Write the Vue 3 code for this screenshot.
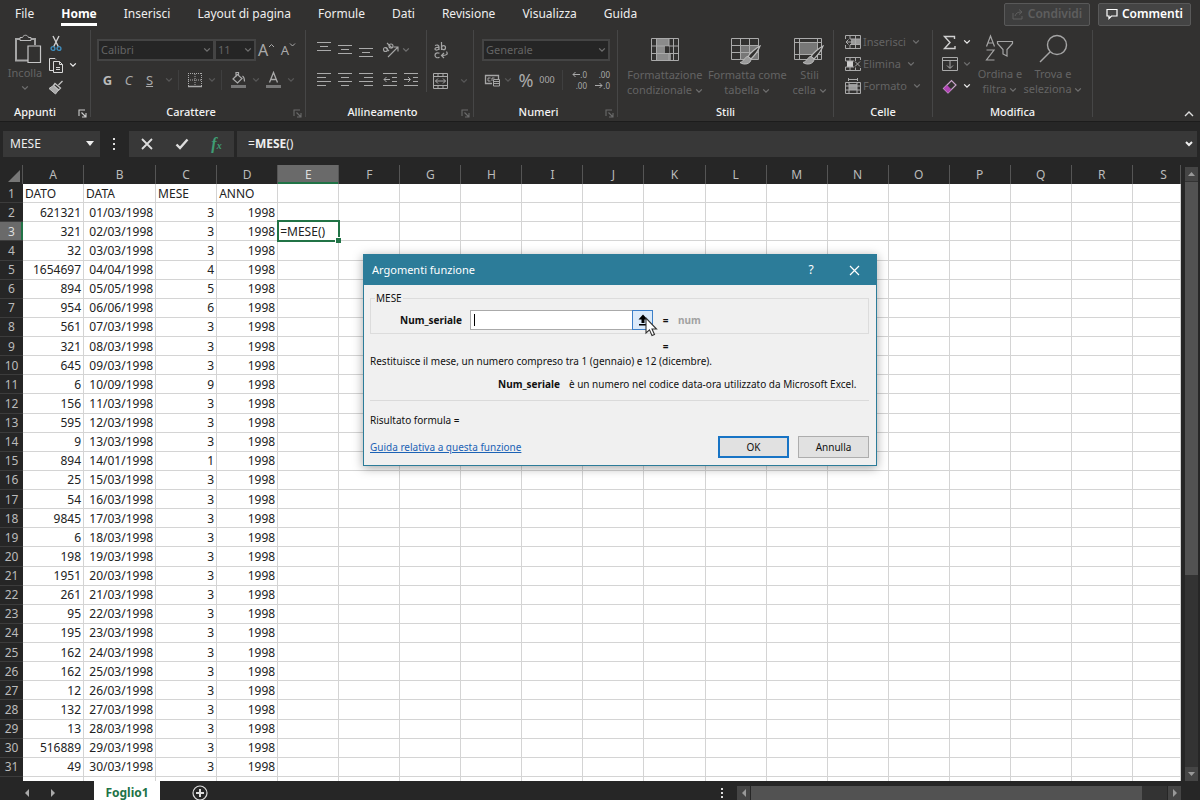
<script setup>
import { ref } from 'vue'

const tabs = ['File', 'Home', 'Inserisci', 'Layout di pagina', 'Formule', 'Dati', 'Revisione', 'Visualizza', 'Guida']
const activeTab = ref('Home')
const columns = 'ABCDEFGHIJKLMNOPQRS'.split('')
const emptyColumns = columns.slice(5)

const records = [
  ['621321', '01/03/1998', 3], ['321', '02/03/1998', 3], ['32', '03/03/1998', 3],
  ['1654697', '04/04/1998', 4], ['894', '05/05/1998', 5], ['954', '06/06/1998', 6],
  ['561', '07/03/1998', 3], ['321', '08/03/1998', 3], ['645', '09/03/1998', 3],
  ['6', '10/09/1998', 9], ['156', '11/03/1998', 3], ['595', '12/03/1998', 3],
  ['9', '13/03/1998', 3], ['894', '14/01/1998', 1], ['25', '15/03/1998', 3],
  ['54', '16/03/1998', 3], ['9845', '17/03/1998', 3], ['6', '18/03/1998', 3],
  ['198', '19/03/1998', 3], ['1951', '20/03/1998', 3], ['261', '21/03/1998', 3],
  ['95', '22/03/1998', 3], ['195', '23/03/1998', 3], ['162', '24/03/1998', 3],
  ['162', '25/03/1998', 3], ['12', '26/03/1998', 3], ['132', '27/03/1998', 3],
  ['13', '28/03/1998', 3], ['516889', '29/03/1998', 3], ['49', '30/03/1998', 3]
]
const formula = ref('=MESE()')
const serial = ref('')
</script>

<template>
  <div class="app">
    <svg class="defs" width="0" height="0" aria-hidden="true">
      <symbol id="chev" viewBox="0 0 8 6"><path d="M1.2 1.4 4 4.2 6.8 1.4" fill="none" stroke="currentColor" stroke-width="1.3" /></symbol>
      <symbol id="launch" viewBox="0 0 9 9"><path d="M1 7V1H7M3.500 3.500 7.500 7.500M8 4V8H4" fill="none" stroke="currentColor" stroke-width="1.100" /></symbol>
      <symbol id="brush" viewBox="0 0 22 20">
        <path d="M21 1C17 3 11 8 9 11.500L12 14C15 11 19.500 5 21 1Z" fill="#323130" stroke="currentColor" stroke-width="1.200" />
        <path d="M9 11.500C5.500 11.500 6 16 1 17.500 5 20.500 12 19 12 14Z" fill="#9a9a9a" stroke="currentColor" />
      </symbol>
    </svg>

    <header class="ribbon">
      <nav class="tabs">
        <button v-for="t in tabs" :key="t" :class="['tab', { active: t === activeTab }]" @click="activeTab = t"><span>{{ t }}</span></button>
        <span class="spacer"></span>
        <button class="top-btn off" disabled>
          <svg width="12" height="12" viewBox="0 0 12 12" fill="none" stroke="currentColor"><path d="M1 5V11H10V8M3 8C4 5 6 4 9 4M7 1.500 10 4 7 6.500" /></svg>Condividi
        </button>
        <button class="top-btn">
          <svg width="12" height="12" viewBox="0 0 12 12" fill="none" stroke="currentColor" stroke-width="1.200"><path d="M1 1.500H11V8H5.500L3 10.500V8H1Z" /></svg>Commenti
        </button>
      </nav>

      <div class="groups">
        <section class="group g-clip">
          <div class="body clip">
            <button class="big paste">
              <svg width="28" height="30" viewBox="0 0 28 30" fill="none"><path d="M6 5H2V26.500H14" stroke="#a5a5a5" stroke-width="2" /><path d="M17 5H21V11" stroke="#a5a5a5" stroke-width="2" /><path d="M6 6.500V3.500H8.500C9.500 .5 13.500 .5 14.500 3.500H17V6.500Z" stroke="#bbb" /><path d="M14 12H26.500V28.500H14Z" stroke="#c6c6c6" stroke-width="1.200" /></svg>
              <span>Incolla</span>
              <svg class="chev"><use href="#chev" /></svg>
            </button>
            <div class="stack">
              <button class="ic" aria-label="Taglia"><svg width="12" height="17" viewBox="0 0 12 17" fill="none"><path d="M3 1 8.500 12M9 1 3.500 12" stroke="#d0d0d0" stroke-width="1.400" /><circle cx="3" cy="13.500" r="1.900" stroke="#3f8dbd" stroke-width="1.400" /><circle cx="9" cy="13.500" r="1.900" stroke="#3f8dbd" stroke-width="1.400" /></svg></button>
              <button class="ic bright" aria-label="Copia"><svg width="16" height="16" viewBox="0 0 16 16" fill="none" stroke="#d8d8d8"><path d="M5.500 13.500H1.500V1.500H7L8 2.500M5.500 4.500H11.500L14.500 7.500V15.500H5.500ZM11.500 4.500V7.500H14.500M8 10.500H12M8 12.500H12" /></svg><svg class="chev"><use href="#chev" /></svg></button>
              <button class="ic" aria-label="Copia formato"><svg width="16" height="15" viewBox="0 0 16 15" fill="none" stroke="#c4c4c4"><path d="M14.500 1 10.500 5M7 3.500 12.500 8 10.500 10 5.500 5.500Z" stroke-width="1.300" /><path d="M5.500 5.500 1 8.500 7.500 14 10.500 10Z" fill="#aaa" /></svg></button>
            </div>
          </div>
          <div class="title"><span>Appunti</span><button class="launch lit" aria-label="Opzioni Appunti"><svg width="9" height="9"><use href="#launch" /></svg></button></div>
        </section>

        <section class="group g-font">
          <div class="body rows">
            <div class="row">
              <button class="combo font" role="combobox" aria-label="Carattere">Calibri<svg class="chev"><use href="#chev" /></svg></button>
              <button class="combo size" role="combobox" aria-label="Dimensione">11<svg class="chev"><use href="#chev" /></svg></button>
              <button class="ic letter grow" aria-label="Aumenta dimensione">A<svg class="caret" viewBox="0 0 8 6"><path d="M1 4 3.500 1.500 6 4" fill="none" stroke="currentColor" /></svg></button>
              <button class="ic letter shrink" aria-label="Riduci dimensione">A<svg class="caret" viewBox="0 0 8 6"><path d="M1 1.500 3.500 4 6 1.500" fill="none" stroke="currentColor" /></svg></button>
            </div>
            <div class="row second">
              <button class="ic st b">G</button>
              <button class="ic st i">C</button>
              <button class="ic st u">S</button>
              <svg class="chev dim"><use href="#chev" /></svg>
              <i class="sep"></i>
              <button class="ic" aria-label="Bordi"><svg width="16" height="16" viewBox="0 0 16 16" fill="none" stroke="#aaa"><path d="M1 1.500H15M1.500 1V14M14.500 1V14M8 2V14M1 8H15" stroke-dasharray="1 1" /><path d="M1 14.500H15" stroke-width="1.500" /></svg></button>
              <svg class="chev dim"><use href="#chev" /></svg>
              <i class="sep"></i>
              <button class="ic" aria-label="Colore riempimento"><svg width="17" height="18" viewBox="0 0 17 18" fill="none" stroke="#aaa"><path d="M7.500 3.500 3 8 7.500 12 12 7.500ZM6 6V1.500H8.500V5M12.500 5C14 6 14.500 8 14.500 10.500" stroke-width="1.200" /><path d="M1 15.500H16" stroke="#777" stroke-width="3" /></svg></button>
              <svg class="chev dim"><use href="#chev" /></svg>
              <button class="ic" aria-label="Colore carattere"><svg width="17" height="18" viewBox="0 0 17 18" fill="none" stroke="#aaa"><path d="M4.500 11.500 8.500 1.500 12.500 11.500M6 8.500H11" stroke-width="1.300" /><path d="M1 15.500H16" stroke="#777" stroke-width="3" /></svg></button>
              <svg class="chev dim"><use href="#chev" /></svg>
            </div>
          </div>
          <div class="title"><span>Carattere</span><button class="launch" aria-label="Opzioni Carattere"><svg width="9" height="9"><use href="#launch" /></svg></button></div>
        </section>

        <section class="group g-align">
          <div class="body rows align">
            <div class="row">
              <button class="ic al" aria-label="Allinea in alto"><svg width="15" height="18" viewBox="0 0 15 18" stroke="#aaa"><path d="M0 1.500H14M3 5.500H11M0 9.500H14" /></svg></button>
              <button class="ic al" aria-label="Allinea al centro"><svg width="15" height="18" viewBox="0 0 15 18" stroke="#aaa"><path d="M0 4.500H14M3 8.500H11M0 12.500H14" /></svg></button>
              <button class="ic al" aria-label="Allinea in basso"><svg width="15" height="18" viewBox="0 0 15 18" stroke="#aaa"><path d="M0 7.500H14M3 11.500H11M0 15.500H14" /></svg></button>
              <button class="ic al wide" aria-label="Orientamento"><svg width="17" height="16" viewBox="0 0 17 16" fill="none" stroke="#a5a5a5" stroke-width="1.100"><path d="M6 15 15.500 5.500M11.500 5H16V9.500" /><circle cx="3.500" cy="7.500" r="2" /><path d="M3.500 5.500 7 9M5 1 10 6" /><circle cx="9" cy="4" r="2" /></svg><svg class="chev"><use href="#chev" /></svg></button>
            </div>
            <div class="row second">
              <button class="ic al" aria-label="Allinea a sinistra"><svg width="15" height="14" viewBox="0 0 15 14" stroke="#aaa"><path d="M0 .5H14M0 4.500H9M0 8.500H14M0 12.500H9" /></svg></button>
              <button class="ic al" aria-label="Centra"><svg width="15" height="14" viewBox="0 0 15 14" stroke="#aaa"><path d="M0 .5H14M3 4.500H11M0 8.500H14M3 12.500H11" /></svg></button>
              <button class="ic al" aria-label="Allinea a destra"><svg width="15" height="14" viewBox="0 0 15 14" stroke="#aaa"><path d="M0 .5H14M5 4.500H14M0 8.500H14M5 12.500H14" /></svg></button>
              <button class="ic al ind" aria-label="Riduci rientro"><svg width="15" height="14" viewBox="0 0 15 14" fill="none" stroke="#aaa"><path d="M0 .5H14M9 4.500H14M9 8.500H14M0 12.500H14M7 6.500H1M3.500 4 1 6.500 3.500 9" /></svg></button>
              <button class="ic al" aria-label="Aumenta rientro"><svg width="15" height="14" viewBox="0 0 15 14" fill="none" stroke="#aaa"><path d="M0 .5H14M9 4.500H14M9 8.500H14M0 12.500H14M0 6.500H6M4 4 6.500 6.500 4 9" /></svg></button>
            </div>
          </div>
          <div class="wrapcol">
            <button class="ic" aria-label="Testo a capo"><svg width="16" height="17" viewBox="0 0 16 17" fill="none" stroke="#a5a5a5" stroke-width="1.200"><path d="M2 3.500C4 2.500 6 3 6 5V8M6 5.500C3 5 2 6 2 7 2 8.500 5 8.500 6 6.500M8.500 0V8" /><circle cx="10.500" cy="5.700" r="2" /><path d="M6.500 11.300C4 10 2 11.500 2 13.300S4 16.500 6.500 15.300M13.500 9.500C15.500 12.500 13 13.500 9 13.500M11 11 8.500 13.500 11 16" /></svg></button>
            <button class="ic" aria-label="Unisci e centra"><svg width="15" height="16" viewBox="0 0 15 16" fill="none" stroke="#aaa"><path d="M.5 .5H14.500V15.500H.5ZM.5 3.500H14.500M.5 12.500H14.500M5 .5V3.500M10 .5V3.500M5 12.500V15.500M10 12.500V15.500M2.500 8H12.500M5 5.500 2.500 8 5 10.500M10 5.500 12.500 8 10 10.500" /></svg><svg class="chev dim"><use href="#chev" /></svg></button>
          </div>
          <div class="title"><span>Allineamento</span><button class="launch" aria-label="Opzioni Allineamento"><svg width="9" height="9"><use href="#launch" /></svg></button></div>
        </section>

        <section class="group g-num">
          <div class="body rows">
            <div class="row"><button class="combo num" role="combobox" aria-label="Formato numero">Generale<svg class="chev"><use href="#chev" /></svg></button></div>
            <div class="row second nums">
              <button class="ic" aria-label="Formato contabilità"><svg width="17" height="14" viewBox="0 0 17 14" fill="none" stroke="#a5a5a5"><path d="M8 10.500H1.500V2.500H14.500V6" stroke-width="1.300" /><path d="M6.500 5H4V8H6.500M8 8V5H10.500" /><path d="M9.500 6.500H15.500V13H9.500ZM9.500 8.500H15.500M9.500 10.500H15.500" fill="#323130" /></svg><svg class="chev dim"><use href="#chev" /></svg></button>
              <button class="ic pct">%</button>
              <button class="ic zeros">000</button>
              <i class="sep"></i>
              <button class="ic dec" aria-label="Aumenta decimali"><span><svg width="8" height="7" viewBox="0 0 8 7"><path d="M8 3.500H1M3.500 1 1 3.500 3.500 6" fill="none" stroke="currentColor" /></svg>.0</span><span>.00</span></button>
              <button class="ic dec" aria-label="Diminuisci decimali"><span>.00</span><span><svg width="8" height="7" viewBox="0 0 8 7"><path d="M0 3.500H7M4.500 1 7 3.500 4.500 6" fill="none" stroke="currentColor" /></svg>.0</span></button>
            </div>
          </div>
          <div class="title"><span>Numeri</span><button class="launch" aria-label="Opzioni Numeri"><svg width="9" height="9"><use href="#launch" /></svg></button></div>
        </section>

        <section class="group g-style">
          <div class="body bigs">
            <button class="big fc">
              <svg width="28" height="24" viewBox="0 0 28 24" fill="none" stroke="#aaa"><path d="M5.500 1H18V8H14V16H20V22H5.500Z" fill="#8b8b8b" stroke="none" /><path d="M.5 .5H27.500V22.500H.5ZM5.500 .5V22.500M18 .5V22.500M22.500 .5V22.500M.5 8H27.500M.5 15.500H27.500" /><path d="M14 8.500H18V15H14Z" fill="#323130" stroke="none" /></svg>
              <span>Formattazione<br>condizionale <svg class="chev"><use href="#chev" /></svg></span>
            </button>
            <button class="big ft">
              <svg width="32" height="28" viewBox="0 0 32 28" fill="none" stroke="#aaa"><path d="M10 8H27V22H10Z" fill="#777" stroke="none" /><path d="M.5 .5H27.500V21.500H.5ZM9.500 .5V21.500M18.500 .5V21.500M.5 7.500H27.500M.5 14.500H27.500" /><use href="#brush" x="8" y="7" width="22" height="20" color="#bbb" /></svg>
              <span>Formatta come<br>tabella <svg class="chev"><use href="#chev" /></svg></span>
            </button>
            <button class="big sc">
              <svg width="32" height="28" viewBox="0 0 32 28" fill="none" stroke="#aaa"><path d="M6 5H23V16H6Z" fill="#777" stroke="none" /><path d="M.5 .5H27.500V21.500H.5ZM5.500 .5V21.500M23.500 .5V21.500M.5 4.500H27.500M.5 16.500H27.500" /><use href="#brush" x="8" y="7" width="22" height="20" color="#bbb" /></svg>
              <span>Stili<br>cella <svg class="chev"><use href="#chev" /></svg></span>
            </button>
          </div>
          <div class="title"><span>Stili</span></div>
        </section>

        <section class="group g-cells">
          <div class="body cells">
            <button class="line"><svg width="16" height="15" viewBox="0 0 16 15" fill="none" stroke="#aaa"><path d="M6 4H15V9H6Z" fill="#999" stroke="none" /><path d="M.5 4V.5H15.500V13.500H.5V10M5 .5V4M10.500 .5V13.500M5 10V13.500M5 4H15.500M5 9.500H15.500M8 7H1M3.500 4.500 1 7 3.500 9.500" /></svg>Inserisci<svg class="chev"><use href="#chev" /></svg></button>
            <button class="line"><svg width="16" height="15" viewBox="0 0 16 15" fill="none" stroke="#aaa"><path d="M2 4H8V10H2Z" fill="#ccc" stroke="none" /><path d="M.5 4V.5H15.500V3M.5 10V13.500H15.500V11M5 .5V4M10.500 .5V4M5 10V13.500M10.500 10.500V13.500M.5 4H9M.5 10H9M10 4.500 15 9.500M15 4.500 10 9.500" /></svg>Elimina<svg class="chev"><use href="#chev" /></svg></button>
            <button class="line"><svg width="16" height="16" viewBox="0 0 16 16" fill="none" stroke="#aaa"><path d="M4 6H12V12H4Z" fill="#999" stroke="none" /><path d="M3.500 0V3M12.500 0V3M3.500 1.500H12.500M.5 4.500H15.500V15.500H.5ZM4 4.500V15.500M12 4.500V15.500M.5 8H15.500M.5 12H15.500" /></svg>Formato<svg class="chev"><use href="#chev" /></svg></button>
          </div>
          <div class="title"><span>Celle</span></div>
        </section>

        <section class="group g-edit">
          <div class="body edit">
            <div class="stack">
              <button class="ic bright" aria-label="Somma"><svg width="16" height="15" viewBox="0 0 16 15" fill="none" stroke="#d0d0d0" stroke-width="1.400"><path d="M12.500 4V1.500H2.500L8 7.500 2.500 13.500H13V11" /></svg><svg class="chev"><use href="#chev" /></svg></button>
              <button class="ic" aria-label="Riempimento"><svg width="16" height="14" viewBox="0 0 16 14" fill="none" stroke="#aaa"><path d="M.5 .5H15.500V13.500H.5ZM.5 3.500H15.500M8 4V11M5 8.500 8 11.500 11 8.500" /></svg><svg class="chev"><use href="#chev" /></svg></button>
              <button class="ic bright" aria-label="Cancella"><svg width="16" height="15" viewBox="0 0 16 15"><path d="M1.500 9.500 9.500 1.500 14 6 6 14Z" fill="none" stroke="#c9a5cb" stroke-width="1.200" /><path d="M1.500 9.500 5 6 9.500 10.500 6 14Z" fill="#b044b4" /></svg><svg class="chev"><use href="#chev" /></svg></button>
            </div>
            <button class="big sort">
              <svg width="30" height="30" viewBox="0 0 30 30" fill="none" stroke="#a5a5a5" stroke-width="1.200"><path d="M1.500 12.500 5.500 2 9.500 12.500M3 9H8M1.500 16H9L1.500 26H9.500M12.500 7.500H27.500V9.500L22 15.500V22L18 20V15.500L12.500 9.500Z" /></svg>
              <span>Ordina e<br>filtra <svg class="chev"><use href="#chev" /></svg></span>
            </button>
            <button class="big find">
              <svg width="30" height="30" viewBox="0 0 30 30" fill="none" stroke="#a5a5a5" stroke-width="1.400"><circle cx="19" cy="11" r="9.500" /><path d="M12 18 2 28" /></svg>
              <span>Trova e<br>seleziona <svg class="chev"><use href="#chev" /></svg></span>
            </button>
          </div>
          <div class="title"><span>Modifica</span></div>
        </section>
        <div class="rest"><button class="ic" aria-label="Comprimi barra"><svg width="12" height="8" viewBox="0 0 12 8" fill="none" stroke="#ddd" stroke-width="1.400"><path d="M2 6 6 2 10 6" /></svg></button></div>
      </div>
    </header>

    <div class="formula-bar">
      <button class="namebox" aria-label="Casella nome"><span>MESE</span><svg width="8" height="5"><path d="M0 0H8L4 5Z" fill="#eee" /></svg></button>
      <svg class="dots" width="3" height="12"><path d="M0 0H2V2H0ZM0 5H2V7H0ZM0 10H2V12H0Z" fill="#ddd" /></svg>
      <div class="actions">
        <button class="ic" aria-label="Annulla immissione"><svg width="12" height="12" viewBox="0 0 12 12"><path d="M1 1 11 11M11 1 1 11" stroke="#ddd" stroke-width="1.800" /></svg></button>
        <button class="ic" aria-label="Conferma"><svg width="14" height="12" viewBox="0 0 14 12" fill="none"><path d="M1.500 6.500 5 10 12.500 1.500" stroke="#ddd" stroke-width="2.400" /></svg></button>
        <button class="ic fx" aria-label="Inserisci funzione">f<small>x</small></button>
      </div>
      <div class="formula"><span role="textbox" aria-label="Barra della formula">=<b>MESE</b>()</span><svg width="8" height="6" viewBox="0 0 8 6" fill="none" stroke="#eee" stroke-width="2"><path d="M1 1 4 4 7 1" /></svg></div>
    </div>

    <main class="workspace">
      <div class="sheet">
        <table>
          <colgroup><col class="c-head"><col v-for="c in columns" :key="c" :class="'c-' + c.toLowerCase()"></colgroup>
          <thead>
            <tr><th class="corner"><svg width="12" height="12"><path d="M12 0V12H0Z" fill="#777" /></svg></th><th v-for="c in columns" :key="c" :class="{ sel: c === 'E' }">{{ c }}</th></tr>
          </thead>
          <tbody>
            <tr><th>1</th><td>DATO</td><td>DATA</td><td>MESE</td><td>ANNO</td><td></td><td v-for="c in emptyColumns" :key="c"></td></tr>
            <tr v-for="(r, i) in records" :key="i">
              <th :class="{ sel: i === 1 }">{{ i + 2 }}</th>
              <td class="n">{{ r[0] }}</td><td class="n">{{ r[1] }}</td><td class="n">{{ r[2] }}</td><td class="n">1998</td>
              <td v-if="i === 1" class="active-cell"><div class="editor">{{ formula }}</div></td><td v-else></td>
              <td v-for="c in emptyColumns" :key="c"></td>
            </tr>
            <tr class="last"><th></th><td v-for="c in columns" :key="c"></td></tr>
          </tbody>
        </table>
      </div>
      <div class="vscroll">
        <button aria-label="Su"><svg width="7" height="4"><path d="M0 4H7L3.500 0Z" fill="#999" /></svg></button>
        <div class="track"><div class="thumb"></div></div>
        <button aria-label="Giù"><svg width="7" height="4"><path d="M0 0H7L3.500 4Z" fill="#999" /></svg></button>
      </div>
    </main>

    <footer class="sheetbar">
      <div class="bar-inner">
        <button class="ic nav" aria-label="Foglio precedente"><svg width="4" height="8"><path d="M4 0V8L0 4Z" fill="#aaa" /></svg></button>
        <button class="ic nav" aria-label="Foglio successivo"><svg width="4" height="8"><path d="M0 0V8L4 4Z" fill="#aaa" /></svg></button>
        <button class="sheet-tab">Foglio1</button>
        <button class="ic add" aria-label="Nuovo foglio"><svg width="16" height="16" viewBox="0 0 16 16" fill="none" stroke="#ddd"><circle cx="8" cy="8" r="7" stroke-width="1.200" /><path d="M8 4V12M4 8H12" stroke-width="2" /></svg></button>
        <span class="spacer"></span>
        <svg class="dots" width="3" height="11"><path d="M0 0H2V2H0ZM0 4H2V6H0ZM0 8H2V10H0Z" fill="#ddd" /></svg>
        <div class="hscroll">
          <button aria-label="Sinistra"><svg width="4" height="8"><path d="M4 0V8L0 4Z" fill="#999" /></svg></button>
          <div class="htrack"><div class="hthumb"></div></div>
          <button aria-label="Destra"><svg width="4" height="8"><path d="M0 0V8L4 4Z" fill="#999" /></svg></button>
        </div>
      </div>
    </footer>

    <div class="dialog" role="dialog" aria-labelledby="dlg-title">
      <div class="titlebar">
        <span id="dlg-title">Argomenti funzione</span>
        <button class="ic" aria-label="Guida">?</button>
        <button class="ic" aria-label="Chiudi"><svg width="11" height="11"><path d="M1 1 10 10M10 1 1 10" stroke="#fff" stroke-width="1.200" /></svg></button>
      </div>
      <div class="dlg-body">
        <fieldset>
          <legend>MESE</legend>
          <div class="arg">
            <label for="serial">Num_seriale</label>
            <div class="field"><span class="inputwrap"><input id="serial" v-model="serial" type="text"><i class="text-caret"></i></span><button class="collapse" aria-label="Comprimi finestra"><svg width="10" height="12" viewBox="0 0 10 12"><path d="M5 .5 9.500 5.500H6.500V9H3.500V5.500H.5ZM1 10H9V11.500H1Z" fill="#000" /></svg></button></div>
            <b>=</b><b class="num">num</b>
          </div>
        </fieldset>
        <div class="arg result"><b>=</b></div>
        <p class="desc">Restituisce il mese, un numero compreso tra 1 (gennaio) e 12 (dicembre).</p>
        <p class="arg-desc"><b>Num_seriale</b><span>è un numero nel codice data-ora utilizzato da Microsoft Excel.</span></p>
        <hr>
        <p class="outcome">Risultato formula =</p>
        <div class="foot"><a href="#">Guida relativa a questa funzione</a><span class="spacer"></span><button class="dbtn ok">OK</button><button class="dbtn">Annulla</button></div>
      </div>
      <svg class="pointer" width="13" height="20" viewBox="0 0 13 20"><path d="M1 1V16L4.500 12.800 7 18.500 9.500 17.500 7 12H11.500Z" fill="#fff" stroke="#333" stroke-width="1.100" /></svg>
    </div>
  </div>
</template>

<style>
body { overflow: hidden; }
</style>

<style scoped>
.app { position: relative; display: flex; flex-direction: column; height: 100vh; overflow: hidden; background: #262626; color: #eee; font-family: "Noto Sans", "Open Sans", sans-serif; font-size: 12px; line-height: 16px; }
.app * { box-sizing: border-box; }
.defs { position: absolute; }
button { font: inherit; color: inherit; background: none; border: 0; padding: 0; margin: 0; }
svg { flex: none; display: block; }
.spacer { flex: 1; }
.ic { display: flex; align-items: center; justify-content: center; }
.chev { width: 8px; height: 6px; color: #707070; }
.dim { color: #585858; }
.bright .chev { color: #eee; }

.ribbon { background: #323130; border-bottom: 1px solid #1c1c1c; flex: none; }
.tabs { display: flex; align-items: center; gap: 1px; height: 28px; padding: 0 9px 0 2px; }
.tab { padding: 0 13px; }
.tab span { display: block; height: 24px; padding-top: 4px; border-bottom: 3px solid transparent; line-height: 16px; }
.tab.active span { border-color: #fff; font-weight: 700; color: #fff; }
.top-btn { display: flex; align-items: center; justify-content: center; gap: 4px; width: 93px; height: 23px; margin-left: 7px; border: 1px solid #595959; border-radius: 2px; background: #444; font-weight: 600; color: #fff; }
.top-btn.off { width: 86px; color: #5e5e5e; background: #3e3e3e; }
.groups { display: flex; height: 93px; padding: 2px 0 0; }
.group { position: relative; display: grid; grid-template-rows: 1fr 18px; height: 87px; border-right: 1px solid #464646; }
.g-clip { flex: 0 0 90px; border: 0; }
.g-font { flex: 0 0 216px; border-left: 1px solid #464646; }
.g-align { flex: 0 0 168px; grid-template-columns: 120px 1fr; }
.g-num { flex: 0 0 144px; }
.g-style { flex: 0 0 216px; }
.g-cells { flex: 0 0 99px; }
.g-edit { flex: 0 0 160px; }
.rest { flex: 1; display: flex; align-items: flex-end; justify-content: flex-end; padding: 0 5px 3px 0; }
.title { grid-column: 1 / -1; grid-row: 2; display: flex; align-items: center; justify-content: center; font-size: 11px; font-weight: 500; color: #f3f3f3; padding-top: 8px; }
.title span { flex: 1; text-align: center; }
.g-clip .title span { padding-right: 6px; }
.launch { width: 14px; height: 14px; color: #6a6a6a; padding: 3px 0 0 2px; }
.lit { color: #ccc; }
.body { min-width: 0; }
.rows { padding: 9px 0 0 8px; }
.row { display: flex; align-items: center; height: 22px; }
.row.second { height: 24px; margin-top: 7px; }
.combo { display: flex; align-items: center; justify-content: space-between; height: 22px; padding: 0 2px; border: 2px solid #444; background: #252525; color: #646464; font-size: 11px; }
.combo.font { width: 118px; }
.combo.size { width: 42px; margin-left: -1px; }
.combo.num { width: 128px; }
.letter { width: 22px; color: #aaa; align-items: flex-start; }
.grow { font-size: 16px; line-height: 18px; }
.shrink { font-size: 13px; line-height: 20px; }
.caret { width: 8px; height: 6px; margin-top: 2px; }
.st { width: 21px; font-size: 13px; color: #aaa; }
.b { font-weight: 700; color: #bbb; }
.i { font-style: italic; }
.u { text-decoration: underline; }
.sep { width: 1px; height: 20px; background: #3f3f3f; margin: 0 6px; }
.g-font .rows { padding-left: 6px; }
.g-font .second .chev { margin: 0 5px; }
.g-font .second .sep { margin: 0 8px 0 0; }
.al { width: 21px; }
.al.ind { margin-left: 3px; }
.al.wide { width: 32px; gap: 3px; margin-left: 3px; }
.wrapcol { display: flex; flex-direction: column; gap: 14px; padding: 12px 0 0 6px; align-self: start; border-left: 1px solid #464646; height: 62px; }
.wrapcol .ic { justify-content: flex-start; gap: 12px; }
.nums { padding-left: 2px; }
.nums .chev { margin-left: 3px; }
.pct { width: 20px; margin-left: 4px; font-size: 18px; color: #aaa; }
.zeros { width: 22px; font-size: 9px; color: #aaa; }
.nums > .sep { margin: 0 4px; }
.dec { flex-direction: column; align-items: flex-end; width: 20px; margin-right: 3px; font-size: 8px; line-height: 11px; color: #aaa; }
.dec span { display: flex; align-items: center; }
.big { display: flex; flex-direction: column; align-items: center; color: #646464; line-height: 15px; text-align: center; white-space: nowrap; font-size: 11px; }
.big span .chev { display: inline-block; }
.clip { display: flex; padding: 2px 0 0 8px; gap: 6px; }
.paste { gap: 1px; width: 34px; padding-top: 2px; }
.paste > svg:first-child { margin-left: 5px; }
.paste > .chev { margin-top: 4px; }
.stack { display: grid; grid-template-rows: repeat(3, 22px); justify-items: start; }
.stack .ic { gap: 5px; min-width: 16px; }
.bigs { display: flex; padding: 8px 0 0 9px; gap: 5px; }
.bigs .big > svg { height: 28px; margin-bottom: 1px; }
.fc > svg { padding-bottom: 4px; }
.sc { width: 36px; }
.cells { display: grid; grid-template-rows: repeat(3, 22px); padding: 1px 0 0 11px; justify-items: start; }
.line { display: flex; align-items: center; gap: 2px; color: #646464; font-size: 11px; }
.line .chev { margin-left: 4px; }
.edit { display: flex; padding: 1px 0 0 9px; }
.edit .stack { width: 34px; }
.edit .big { padding-top: 3px; gap: 2px; }
.sort { width: 48px; }
.find { width: 58px; }

.formula-bar { display: flex; align-items: center; height: 43px; flex: none; padding: 0 3px; }
.namebox { display: flex; align-items: center; justify-content: space-between; width: 97px; height: 26px; padding: 0 6px 0 7px; background: #383838; }
.dots { margin: 0 13px; }
.actions { display: flex; width: 105px; height: 26px; background: #383838; }
.actions .ic { flex: 1; }
.fx { font-family: "Liberation Serif", serif; font-style: italic; font-size: 16px; color: #3f9c74; font-weight: 700; }
.fx small { font-size: 10px; padding-top: 5px; }
.formula { flex: 1; display: flex; align-items: center; justify-content: space-between; height: 26px; margin-left: 3px; padding: 0 4px 0 11px; background: #383838; }

.workspace { flex: 1; display: flex; min-height: 0; }
.sheet { flex: 1; min-width: 0; background: #fff; }
table { width: 100%; height: 100%; table-layout: fixed; border-collapse: separate; border-spacing: 0; color: #222; }
col { width: 61px; }
.c-head { width: 23px; }
.c-b { width: 72px; }
.c-s { width: 48px; }
tr { height: 19px; }
.last { height: 4px; }
th { background: #262626; color: #bbb; font-weight: 400; padding: 0; line-height: 16px; }
thead th { border-right: 1px solid #555; }
thead th:last-child { padding-left: 14px; }
tbody th { border-bottom: 1px solid #3c3c3c; text-align: center; }
td { padding: 1px 2px 0; border-right: 1px solid #d4d4d4; border-bottom: 1px solid #d4d4d4; white-space: nowrap; line-height: 16px; }
tbody th { padding-top: 1px; }
.n { text-align: right; }
.last td, .last th { padding: 0; line-height: 0; border-bottom: 0; }
thead .sel { background: #6a6a6a; color: #ddd; box-shadow: inset 0 -2px #217346; }
tbody .sel { background: #6a6a6a; box-shadow: inset -2px 0 #217346; color: #ddd; }
.corner svg { margin: 2px 0 0 8px; }
.active-cell { position: relative; }
.editor { position: absolute; inset: -2px -2px -2px -1px; border: 2px solid #217346; background: #fff; padding: 1px 1px; line-height: 17px; }
.editor::after { content: ""; position: absolute; right: -3px; bottom: -3px; width: 5px; height: 5px; background: #217346; border: 1px solid #fff; border-width: 1px 0 0 1px; }
.vscroll { display: flex; flex-direction: column; width: 19px; padding: 2px 2px 0 4px; }
.vscroll button { display: flex; align-items: center; justify-content: center; height: 14px; background: #454545; }
.track { flex: 1; background: #333; }
.thumb { height: 67%; margin-top: 1px; background: #525252; }

.sheetbar { height: 19px; flex: none; overflow: hidden; }
.bar-inner { display: flex; align-items: center; height: 24px; padding: 0 19px 0 14px; }
.nav { width: 26px; }
.sheet-tab { width: 66px; height: 24px; margin-left: 28px; background: #fff; color: #217346; font-weight: 700; }
.add { margin-left: 32px; }
.hscroll { display: flex; width: 444px; height: 14px; gap: 1px; }
.hscroll button { display: flex; align-items: center; justify-content: center; width: 13px; background: #454545; }
.htrack { flex: 1; background: #333; }
.hthumb { width: 94%; height: 100%; background: #525252; }

.dialog { position: absolute; left: 363px; top: 254px; width: 514px; border: 1px solid #2c7c99; background: #f0f0f0; color: #111; font-size: 10px; line-height: 16px; box-shadow: 0 2px 10px rgba(0, 0, 0, .35); }
.titlebar { display: flex; align-items: center; height: 30px; padding: 0 8px; background: #2c7c99; color: #fff; font-size: 11px; }
.titlebar span { flex: 1; }
.titlebar .ic { width: 28px; margin-left: 15px; font-size: 12px; }
.dlg-body { padding: 5px 7px 7px 6px; }
fieldset { margin: 0; padding: 4px 0 3px; border: 1px solid #dcdcdc; min-width: 0; }
legend { margin-left: 4px; padding: 0 1px; }
.arg { display: grid; grid-template-columns: 91px 183px 9px 1fr; column-gap: 8px; align-items: center; }
.arg label { text-align: right; font-weight: 700; }
.arg b { text-align: center; }
.arg .num { text-align: left; color: #a2a2a2; }
.result { padding-left: 1px; margin-top: 4px; }
.result b { grid-column: 3; }
.field { display: flex; height: 20px; }
.inputwrap { position: relative; flex: 1; display: flex; }
.inputwrap input { width: 100%; min-width: 0; border: 1px solid #aaa; border-right: 0; background: #fff; padding: 0 4px; font: inherit; outline: 0; }
.text-caret { position: absolute; left: 4px; top: 4px; width: 1px; height: 12px; background: #000; }
.collapse { display: flex; align-items: center; justify-content: center; width: 21px; border: 1px solid #3c7fc8; background: #dbeafa; }
p { margin: 0; }
.desc { margin-top: -1px; }
.arg-desc { display: flex; gap: 9px; margin: 7px 0 0 128px; white-space: nowrap; }
hr { margin: 8px 0 11px; border: 0; border-top: 1px solid #dadada; }
.foot { display: flex; align-items: center; gap: 9px; margin-top: 8px; }
.foot a { color: #1b62b5; }
.dbtn { width: 71px; height: 22px; border: 1px solid #adadad; background: #e1e1e1; }
.ok { border: 2px solid #1874c5; }
.pointer { position: absolute; left: 281px; top: 62px; }
</style>
